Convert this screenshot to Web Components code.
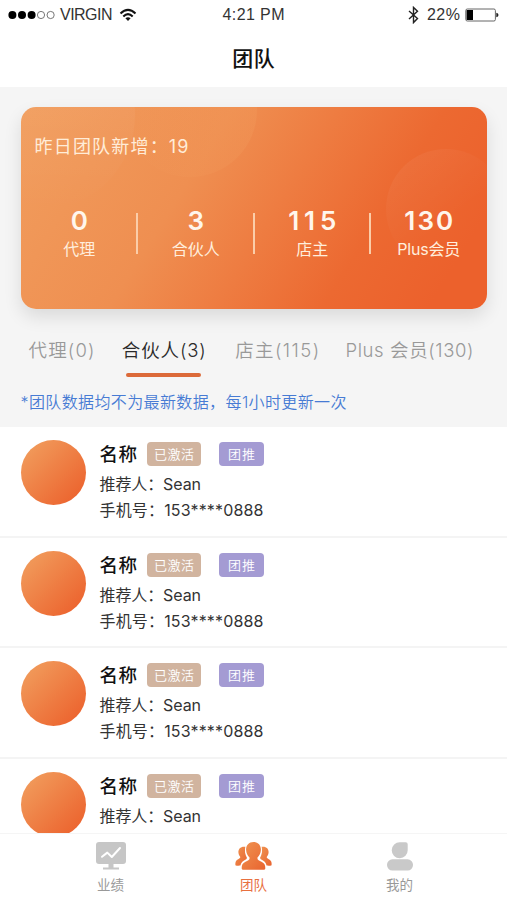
<!DOCTYPE html>
<html lang="zh-CN">
<head>
<meta charset="utf-8">
<meta name="viewport" content="width=device-width">
<title>团队</title>
<style>
  html, body { margin: 0; height: 900px; background: #fff; overflow: hidden; }
  body { font-family: Inter, "Noto Sans CJK SC", sans-serif; }
</style>
</head>
<body>
<team-page></team-page>
<script>
const mount = (host, html) => { host.attachShadow({ mode: 'open' }).innerHTML = html; };

/* One line of text, tracked so that it fills the width given in "w". */
class FitText extends HTMLElement {
  connectedCallback() {
    if (this.shadowRoot) return;
    mount(this, `<style>
      :host { display: block; white-space: nowrap; width: max-content; }
      span { display: inline-block; }
    </style><span><slot></slot></span>`);
    const w = parseFloat(this.getAttribute('w'));
    const span = this.shadowRoot.querySelector('span');
    const natural = span.getBoundingClientRect().width;
    const count = this.textContent.length;
    if (w && natural) {
      const ls = (w - natural) / Math.max(1, count - 1);
      span.style.letterSpacing = ls.toFixed(3) + 'px';
      span.style.marginRight = (-ls).toFixed(3) + 'px';
    }
  }
}
customElements.define('fit-text', FitText);

class StatusBar extends HTMLElement {
  connectedCallback() {
    mount(this, `<style>
      :host { display: grid; grid-template-columns: 1fr auto 1fr; align-items: center; height: 30px;
        padding: 0 8px; box-sizing: border-box; color: #333;
        font: 16px/30px "Liberation Sans", sans-serif; }
      div { display: flex; align-items: center; }
      .right { justify-content: flex-end; }
      svg { display: block; }
      .wifi { margin-left: 7px; }
      .dots { margin-right: 5px; }
      .bt { margin-right: 8px; }
      .bat { margin-left: 5px; }
    </style>
    <div>
      <svg class="dots" width="47" height="10" viewBox="0 0 47 10">
        <g fill="#000"><circle cx="4.4" cy="5" r="4"/><circle cx="14" cy="5" r="4"/><circle cx="23.6" cy="5" r="4"/></g>
        <g fill="none" stroke="#555" stroke-width=".8"><circle cx="33" cy="5" r="3.6"/><circle cx="42.6" cy="5" r="3.6"/></g>
      </svg>
      <fit-text w="52.5">VIRGIN</fit-text>
      <svg class="wifi" width="18" height="14" viewBox="0 0 18 14">
        <g fill="none" stroke="#111" stroke-width="2.1"><path d="M1.5 5.4Q9-1.6 16.5 5.4"/><path d="M4.3 8.4Q9 4 13.7 8.4"/></g>
        <path d="M6.4 10.3Q9 8.3 11.6 10.3L9 13Z" fill="#111"/>
      </svg>
    </div>
    <fit-text w="62">4:21 PM</fit-text>
    <div class="right">
      <svg class="bt" width="11" height="18" viewBox="0 0 11 18"><path d="M1 5L9.5 12.5L5.5 16.6V1.4L9.5 5.2L1 13" fill="none" stroke="#222" stroke-width="1.4"/></svg>
      <fit-text w="33">22%</fit-text>
      <svg class="bat" width="34" height="14" viewBox="0 0 34 14">
        <rect x=".8" y="1" width="29.6" height="12" rx="1.5" fill="#fff" stroke="#666" stroke-width="1"/>
        <rect x="1.6" y="2" width="6.4" height="10" fill="#000"/>
        <path d="M31.3 4.7Q33.5 5 33.5 7T31.3 9.3Z" fill="#222"/>
      </svg>
    </div>`);
  }
}
customElements.define('status-bar', StatusBar);

class NavTitle extends HTMLElement {
  connectedCallback() {
    mount(this, `<style>
      :host { display: flex; justify-content: center; height: 57px; color: #111;
        font: 500 21px/54px "Noto Sans CJK SC", sans-serif; }
    </style><fit-text w="42.5">${this.getAttribute('label')}</fit-text>`);
  }
}
customElements.define('nav-title', NavTitle);

class StatItem extends HTMLElement {
  connectedCallback() {
    mount(this, `<style>
      :host { display: flex; flex-direction: column; align-items: center; flex: 1; color: #ffeedd; padding-left: 1px; }
      .n { font: 600 26px/30px Inter, sans-serif; color: #fff6ec; }
      .l { font: 400 16px/26px Inter, "Noto Sans CJK SC", sans-serif; }
    </style>
    <fit-text class="n" w="${this.getAttribute('nw')}">${this.getAttribute('value')}</fit-text>
    <fit-text class="l" w="${this.getAttribute('lw')}">${this.getAttribute('label')}</fit-text>`);
  }
}
customElements.define('stat-item', StatItem);

class SummaryCard extends HTMLElement {
  connectedCallback() {
    mount(this, `<style>
      :host { display: block; position: relative; overflow: hidden; box-sizing: border-box; height: 202px;
        border-radius: 15px; background: linear-gradient(122deg, #f19d5d 0%, #ef8f51 36%, #ee7c41 54%, #ec6931 72%, #ec612c 90%); }
      svg { position: absolute; inset: 0; }
      .head { position: relative; padding: 26px 0 0 14px; color: #ffecd8; font: 400 18px/28px Inter, "Noto Sans CJK SC", sans-serif; }
      .stats { position: relative; display: flex; padding-top: 45px; }
      i { width: 2px; height: 41px; margin: 7px -1px 0; background: #fbcda9; }
    </style>
    <svg width="466" height="202" viewBox="0 0 466 202">
      <defs>
        <linearGradient id="a" x1="0" y1="0" x2="0" y2="1"><stop offset="0" stop-color="#fff" stop-opacity=".05"/><stop offset=".5" stop-color="#fff" stop-opacity=".04"/><stop offset="1" stop-color="#fff" stop-opacity="0"/></linearGradient>
        <linearGradient id="b" x1="0" y1="0" x2="1" y2="0"><stop offset="0" stop-color="#f4a060" stop-opacity="0"/><stop offset="1" stop-color="#f4a060" stop-opacity=".25"/></linearGradient>
        <linearGradient id="c" x1="0" y1="0" x2=".7" y2=".9"><stop offset="0" stop-color="#fff" stop-opacity=".06"/><stop offset=".7" stop-color="#fff" stop-opacity="0"/></linearGradient>
      </defs>
      <circle cx="19" cy="8" r="95" fill="url(#a)"/>
      <circle cx="169" cy="3" r="67" fill="url(#b)"/>
      <circle cx="425" cy="102" r="60" fill="url(#c)"/>
    </svg>
    <div class="head"><fit-text w="154">昨日团队新增：19</fit-text></div>
    <div class="stats">
      <stat-item value="0" nw="16" label="代理" lw="32"></stat-item><i></i>
      <stat-item value="3" nw="16" label="合伙人" lw="48"></stat-item><i></i>
      <stat-item value="115" nw="48" label="店主" lw="32"></stat-item><i></i>
      <stat-item value="130" nw="49" label="Plus会员" lw="63"></stat-item>
    </div>`);
  }
}
customElements.define('summary-card', SummaryCard);

class TeamTab extends HTMLElement {
  connectedCallback() {
    mount(this, `<style>
      :host { display: flex; flex-direction: column; align-items: center; color: #999;
        font: 350 18.5px/28px Inter, "Noto Sans CJK SC", sans-serif; }
      :host([active]) { color: #2a2a2a; }
      i { display: none; width: 75px; height: 4px; margin-top: 9px; border-radius: 2px; background: #dc6a39; }
      :host([active]) i { display: block; }
    </style><fit-text w="${this.getAttribute('w')}">${this.getAttribute('label')}</fit-text><i></i>`);
  }
}
customElements.define('team-tab', TeamTab);

class TagPill extends HTMLElement {
  connectedCallback() {
    mount(this, `<style>
      :host { display: flex; justify-content: center; height: 24px; border-radius: 4px; color: #fff;
        font: 350 13px/23px "Noto Sans CJK SC", sans-serif; }
      :host([kind="state"]) { width: 54px; background: #d1b49f; }
      :host([kind="push"]) { width: 45px; background: #a49bd3; }
    </style><fit-text w="${this.getAttribute('w')}">${this.textContent}</fit-text>`);
  }
}
customElements.define('tag-pill', TagPill);

class MemberRow extends HTMLElement {
  connectedCallback() {
    const phone = this.getAttribute('phone');
    mount(this, `<style>
      :host { display: flex; gap: 14px; box-sizing: border-box; height: 110.7px; flex: none; padding: 13px 20.5px 0;
        border-bottom: 2px solid #f4f4f4; color: #333; font: 400 16px/26px Inter, "Noto Sans CJK SC", sans-serif; }
      .avatar { width: 65px; height: 65px; border-radius: 50%; background: linear-gradient(135deg, #f19c5c 8%, #ec632e 90%); }
      .top { display: flex; align-items: center; height: 28px; margin-bottom: 3px; }
      .name { font: 500 18.5px/26px "Noto Sans CJK SC", sans-serif; color: #111; margin: -2px 10px 0 0; }
      tag-pill + tag-pill { margin-left: 18px; }
    </style>
    <div class="avatar"></div>
    <div>
      <div class="top"><fit-text class="name" w="37.5">名称</fit-text><tag-pill kind="state" w="40">已激活</tag-pill><tag-pill kind="push" w="27">团推</tag-pill></div>
      <fit-text w="101.5">推荐人：Sean</fit-text>
      ${phone ? `<fit-text w="164">手机号：${phone}</fit-text>` : ''}
    </div>`);
  }
}
customElements.define('member-row', MemberRow);

class TabItem extends HTMLElement {
  connectedCallback() {
    mount(this, `<style>
      :host { display: flex; flex-direction: column; align-items: center; color: #999;
        font: 400 13.5px/20px "Noto Sans CJK SC", sans-serif; }
      :host([active]) { color: #e8703f; }
      .icon { height: 34px; display: flex; align-items: center; margin-bottom: 1px; }
    </style><div class="icon"><slot></slot></div><fit-text w="27">${this.getAttribute('label')}</fit-text>`);
  }
}
customElements.define('tab-item', TabItem);

class TabBar extends HTMLElement {
  connectedCallback() {
    mount(this, `<style>
      :host { display: flex; justify-content: space-between; padding: 5px 77px 0 80px;
        box-sizing: border-box; height: 67px; background: #fff; border-top: 1px solid #f5f5f5; }
      tab-item { width: 61px; }
      tab-item[active] { margin-right: 3px; }
      svg { display: block; }
    </style>
    <tab-item label="业绩"><svg width="30" height="28" viewBox="0 0 30 28">
      <rect x="0" y="0" width="30" height="22" rx="3" fill="#c6c6c6"/><path d="M12.5 22h5v4h-5zM7 25.6h16v2H7z" fill="#c6c6c6"/>
      <path d="M6 14.8L11.3 10.6L15.8 15L24 6" fill="none" stroke="#fff" stroke-width="2" stroke-linecap="round" stroke-linejoin="round"/></svg></tab-item>
    <tab-item label="团队" active><svg width="37" height="28" viewBox="0 0 37 28">
      <defs><linearGradient id="g" x1="0" y1="0" x2="1" y2="1"><stop offset="0" stop-color="#ef9452"/><stop offset="1" stop-color="#e9642f"/></linearGradient></defs>
      <g fill="url(#g)">
      <path d="M10.5 4.8C6 4 3.2 6.7 3.4 10.2C3.5 12.2 4.4 13.8 5.3 15C5.6 16.4 1.8 17.3 .8 19.4C.2 20.8 .2 23 .7 23.4C2.2 23.8 4 23.7 5.4 23.6C6 20.5 8 18.8 11.2 17.3L12 16C10 12.6 9.4 8.4 10.5 4.8Z"/>
      <path d="M26.5 4.8C31 4 33.8 6.7 33.6 10.2C33.5 12.2 32.6 13.8 31.7 15C31.4 16.4 35.2 17.3 36.2 19.4C36.8 20.8 36.8 23 36.3 23.4C34.8 23.8 33 23.7 31.6 23.6C31 20.5 29 18.8 25.8 17.3L25 16C27 12.6 27.6 8.4 26.5 4.8Z"/></g>
      <path d="M18.5 0C13.7 0 10.9 3.6 11.1 8C11.2 11 12.7 13.8 14.5 15.5C15 17.8 13 18.5 10.5 19.7C7.3 21.2 6.6 23.3 6.7 26.5Q6.8 27.8 8.2 27.8H28.8Q30.2 27.8 30.3 26.5C30.4 23.3 29.7 21.2 26.5 19.7C24 18.5 22 17.8 22.5 15.5C24.3 13.8 25.8 11 25.9 8C26.1 3.6 23.3 0 18.5 0Z" fill="url(#g)" stroke="#fff" stroke-width="1.8" paint-order="stroke"/></svg></tab-item>
    <tab-item label="我的"><svg width="26" height="29" viewBox="0 0 26 29">
      <path d="M13 .3H18.7Q20.7 .3 20.7 2.3V8A8 8 0 1 1 13 .3Z" fill="#c9c9c9"/><rect x="0" y="17.3" width="26" height="11.2" rx="5.4" fill="#c9c9c9"/></svg></tab-item>`);
  }
}
customElements.define('tab-bar', TabBar);

class TeamPage extends HTMLElement {
  connectedCallback() {
    mount(this, `<style>
      :host { display: flex; flex-direction: column; width: 507px; height: 900px; overflow: hidden; background: #fff; }
      .summary { height: 340px; box-sizing: border-box; padding: 20px 20.5px 0; background: #f5f5f5; flex: none; }
      .shade { border-radius: 15px; box-shadow: 0 8px 18px rgba(0,0,0,.11); }
      .tabs { display: flex; justify-content: space-between; padding: 27px 13px 0 8px; height: 43px; }
      .tabs team-tab:nth-child(2) { margin: 0 1px 0 -1px; }
      .tabs team-tab:nth-child(3) { margin-right: -2px; }
      .note { margin-top: 10px; color: #477bd4; font: 350 16px/26px Inter, "Noto Sans CJK SC", sans-serif; }
      .list { flex: 1; min-height: 0; overflow: hidden; display: flex; flex-direction: column; }
      tab-bar { flex: none; }
    </style>
    <status-bar></status-bar>
    <nav-title label="团队"></nav-title>
    <div class="summary">
      <div class="shade"><summary-card></summary-card></div>
      <div class="tabs">
        <team-tab label="代理(0)" w="66"></team-tab>
        <team-tab label="合伙人(3)" w="84" active></team-tab>
        <team-tab label="店主(115)" w="84"></team-tab>
        <team-tab label="Plus 会员(130)" w="128"></team-tab>
      </div>
      <fit-text class="note" w="326">*团队数据均不为最新数据，每1小时更新一次</fit-text>
    </div>
    <div class="list">
      <member-row phone="153****0888"></member-row>
      <member-row phone="153****0888"></member-row>
      <member-row phone="153****0888"></member-row>
      <member-row></member-row>
    </div>
    <tab-bar></tab-bar>`);
  }
}
customElements.define('team-page', TeamPage);
</script>
</body>
</html>
